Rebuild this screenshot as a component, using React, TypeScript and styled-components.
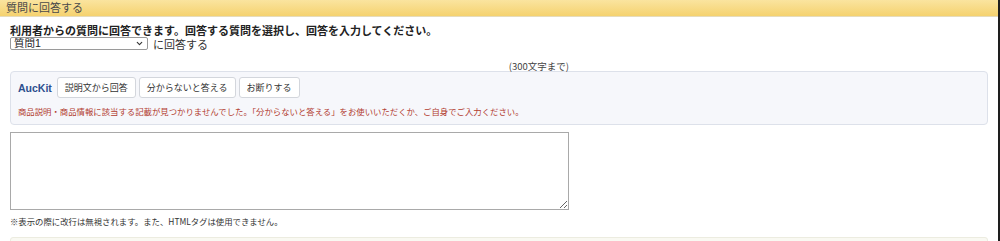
import React from 'react'
import styled, { createGlobalStyle } from 'styled-components';
import { ChevronDown } from 'lucide-react';

const GlobalStyle = createGlobalStyle`
    html, body {
        margin: 0;
        padding: 0;
        background: #fff;
    }
    body {
        font-family: "Noto Sans CJK JP", sans-serif;
        color: #333;
    }
`;

const App = () => {
  return (
    <>
      <GlobalStyle />
      <Page>
        <Header>質問に回答する</Header>
        <Body>
          <Lead>利用者からの質問に回答できます。回答する質問を選択し、回答を入力してください。</Lead>
          <SelectRow>
            <SelectWrap>
              <Select defaultValue="1">
                <option value="1">質問1</option>
              </Select>
              <Chevron size={9} strokeWidth={3} />
            </SelectWrap>
            <SelectLabel>に回答する</SelectLabel>
          </SelectRow>
          <Limit>(300文字まで)</Limit>
          <KitBox>
            <KitRow>
              <KitName>AucKit</KitName>
              <KitButton>説明文から回答</KitButton>
              <KitButton>分からないと答える</KitButton>
              <KitButton>お断りする</KitButton>
            </KitRow>
            <KitNotice>
              商品説明・商品情報に該当する記載が見つかりませんでした。「分からないと答える」をお使いいただくか、ご自身でご入力ください。
            </KitNotice>
          </KitBox>
          <Answer />
          <Note>※表示の際に改行は無視されます。また、HTMLタグは使用できません。</Note>
          <NextBox />
        </Body>
      </Page>
    </>
  )
}

export default App;

const Page = styled.div`
    width: 998px;
    height: 241px;
    overflow: hidden;
    border-right: 2px solid #1e1e1e;
`;
const Header = styled.div`
    height: 16px;
    line-height: 15px;
    padding-left: 6px;
    font-size: 11px;
    color: #4a4a4a;
    background: linear-gradient(#fae49f, #f5d26f);
    border-bottom: 1px solid #e6dcbc;
`;
const Body = styled.div`
    padding: 7px 10px 0 10px;
`;
const Lead = styled.div`
    font-size: 11px;
    font-weight: bold;
    line-height: 12px;
    color: #222;
`;
const SelectRow = styled.div`
    display: flex;
    align-items: center;
    gap: 5px;
    height: 13px;
    margin-top: 1px;
`;
const SelectWrap = styled.div`
    position: relative;
    width: 138px;
    height: 13px;
`;
const Select = styled.select`
    appearance: none;
    display: block;
    width: 100%;
    height: 13px;
    box-sizing: border-box;
    font-size: 10.5px;
    line-height: 11px;
    padding: 0 0 0 3px;
    border: 1px solid #9a9a9a;
    border-radius: 2px;
    background: #fff;
    color: #222;
    font-family: "Liberation Sans", "Noto Sans CJK JP", sans-serif;
    overflow: hidden;
`;
const Chevron = styled(ChevronDown)`
    position: absolute;
    right: 4px;
    top: 2px;
    color: #333;
    pointer-events: none;
`;
const SelectLabel = styled.span`
    font-size: 11px;
    line-height: 12px;
    color: #333;
`;
const Limit = styled.div`
    width: 559px;
    text-align: right;
    font-size: 9.5px;
    line-height: 10px;
    margin-top: 11px;
    color: #444;
`;
const KitBox = styled.div`
    width: 978px;
    box-sizing: border-box;
    height: 54px;
    background: #f6f7fb;
    border: 1px solid #dde1ea;
    border-radius: 4px;
    padding: 5px 7px 0 7px;
`;
const KitRow = styled.div`
    display: flex;
    align-items: center;
    gap: 3px;
`;
const KitName = styled.span`
    font-size: 10.5px;
    font-weight: bold;
    color: #2d4f8e;
    margin-right: 2px;
    font-family: "Liberation Sans", sans-serif;
`;
const KitButton = styled.button`
    height: 21px;
    padding: 0 7px;
    font-size: 9px;
    color: #333;
    background: #fff;
    border: 1px solid #d3d6dc;
    border-radius: 3px;
    font-family: "Noto Sans CJK JP", sans-serif;
    cursor: pointer;
`;
const KitNotice = styled.div`
    margin-top: 7px;
    font-size: 8.4px;
    color: #b23b2f;
    line-height: 12px;
    white-space: nowrap;
`;
const Answer = styled.textarea`
    display: block;
    width: 559px;
    height: 78px;
    box-sizing: border-box;
    margin-top: 7px;
    border: 1px solid #a9a9a9;
    resize: both;
`;
const Note = styled.div`
    margin-top: 5px;
    font-size: 8.4px;
    line-height: 12px;
    color: #333;
    white-space: nowrap;
`;
const NextBox = styled.div`
    width: 978px;
    height: 20px;
    margin-top: 10px;
    box-sizing: border-box;
    background: #f9f9f2;
    border: 1px solid #ecece0;
    border-radius: 3px;
`;
